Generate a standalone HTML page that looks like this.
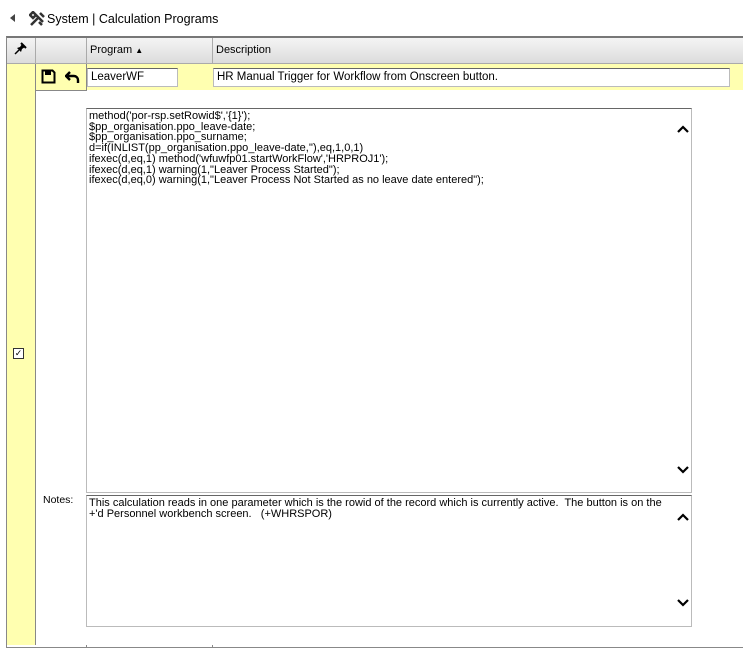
<!DOCTYPE html>
<html><head><style>
body{margin:0;width:743px;height:648px;background:#fff;font-family:"Liberation Sans",Arial,sans-serif;font-size:11px;color:#000;position:relative;overflow:hidden}
.a{position:absolute}
.hdr{background:linear-gradient(#f4f4f4,#dcdcdc);}
pre{margin:0;font-family:"Liberation Sans",Arial,sans-serif;font-size:11px;line-height:10.7px;white-space:pre}
.box{border:1px solid #bbb;border-top:1px solid #666;background:#fff}
</style></head><body>
<div class="a" style="left:10px;top:14px;width:0;height:0;border-top:4px solid transparent;border-bottom:4px solid transparent;border-right:5px solid #444"></div>
<svg class="a" style="left:29px;top:11px" width="17" height="16" viewBox="0 0 17 16"><path d="M2 14 L10 6 M6 3 L14 11 M11 2 L15 6 M1 4 L4 1 L7 4 L4 7Z M10 11 L13 14" fill="none" stroke="#333" stroke-width="2.5"/></svg>
<div class="a" style="left:47px;top:12px;font-size:12.5px">System | Calculation Programs</div>
<div class="a" style="left:6px;top:36px;width:737px;height:609px;border-left:1px solid #888;border-top:2px solid #777;border-bottom:1px solid #888"></div>
<div class="a hdr" style="left:7px;top:38px;width:736px;height:25px;border-bottom:1px solid #aaa"></div>
<div class="a" style="left:35px;top:38px;width:1px;height:25px;background:#aaa"></div>
<div class="a" style="left:86px;top:38px;width:1px;height:25px;background:#aaa"></div>
<div class="a" style="left:212px;top:38px;width:1px;height:25px;background:#aaa"></div>
<svg class="a" style="left:14px;top:42px" width="13" height="13" viewBox="0 0 13 13"><path d="M1 12 L5 8" stroke="#000" stroke-width="1.5"/><path d="M3 6 L7 10 L8 7 L11 5 L8 2 L6 5 Z" fill="#000"/><path d="M7 1 L12 6" stroke="#000" stroke-width="2"/></svg>
<div class="a" style="left:90px;top:44px;font-size:11px">Program <span style="font-size:8px">&#9650;</span></div>
<div class="a" style="left:216px;top:44px;font-size:11px">Description</div>
<div class="a" style="left:7px;top:64px;width:28px;height:581px;background:#ffffb0;border-right:1px solid #888"></div>
<div class="a" style="left:36px;top:64px;width:707px;height:26px;background:#ffffb0"></div>
<div class="a" style="left:36px;top:90px;width:50px;height:1px;background:#888"></div>
<div class="a" style="left:86px;top:64px;width:1px;height:27px;background:#888"></div>
<svg class="a" style="left:41px;top:69px" width="15" height="15" viewBox="0 0 15 15"><path d="M1.5 1.5h10l2 2v10h-12z" fill="none" stroke="#000" stroke-width="2"/><rect x="4" y="2" width="6" height="4" fill="#000"/></svg>
<svg class="a" style="left:65px;top:69px" width="16" height="15" viewBox="0 0 16 15"><path d="M5 3 L1 7 L5 11 M2 7 H9 A4 4 0 0 1 13 11 V14" fill="none" stroke="#000" stroke-width="2.4"/></svg>
<div class="a" style="left:87px;top:68px;width:86px;height:17px;background:#fff;border:1px solid #bbb;border-top-color:#666;padding-left:3px;line-height:17px;font-size:11.5px">LeaverWF</div>
<div class="a" style="left:213px;top:68px;width:512px;height:17px;background:#fff;border:1px solid #bbb;border-top-color:#666;padding-left:3px;line-height:17px;font-size:11.5px">HR Manual Trigger for Workflow from Onscreen button.</div>
<div class="a box" style="left:86px;top:108px;width:604px;height:383px"></div>
<pre class="a" style="left:89px;top:111px">method('por-rsp.setRowid$','{1}');
$pp_organisation.ppo_leave-date;
$pp_organisation.ppo_surname;
d=if(INLIST(pp_organisation.ppo_leave-date,''),eq,1,0,1)
ifexec(d,eq,1) method('wfuwfp01.startWorkFlow','HRPROJ1');
ifexec(d,eq,1) warning(1,"Leaver Process Started");
ifexec(d,eq,0) warning(1,"Leaver Process Not Started as no leave date entered");</pre>
<svg class="a" style="left:677px;top:125px" width="12" height="9"><path d="M1 7 L6 2 L11 7" fill="none" stroke="#000" stroke-width="2.2"/></svg>
<svg class="a" style="left:677px;top:465px" width="12" height="9"><path d="M1 2 L6 7 L11 2" fill="none" stroke="#000" stroke-width="2.2"/></svg>
<div class="a" style="left:13px;top:348px;width:9px;height:9px;border:1px solid #333;background:#fff;font-size:9px;line-height:9px;text-align:center">&#10003;</div>
<div class="a" style="left:43px;top:494px;font-size:10.5px">Notes:</div>
<div class="a box" style="left:86px;top:495px;width:604px;height:130px"></div>
<pre class="a" style="left:89px;top:498px">This calculation reads in one parameter which is the rowid of the record which is currently active.  The button is on the
+'d Personnel workbench screen.   (+WHRSPOR)</pre>
<svg class="a" style="left:677px;top:513px" width="12" height="9"><path d="M1 7 L6 2 L11 7" fill="none" stroke="#000" stroke-width="2.2"/></svg>
<svg class="a" style="left:677px;top:598px" width="12" height="9"><path d="M1 2 L6 7 L11 2" fill="none" stroke="#000" stroke-width="2.2"/></svg>
<div class="a" style="left:86px;top:645px;width:1px;height:3px;background:#888"></div>
<div class="a" style="left:212px;top:645px;width:1px;height:3px;background:#888"></div>
</body></html>
